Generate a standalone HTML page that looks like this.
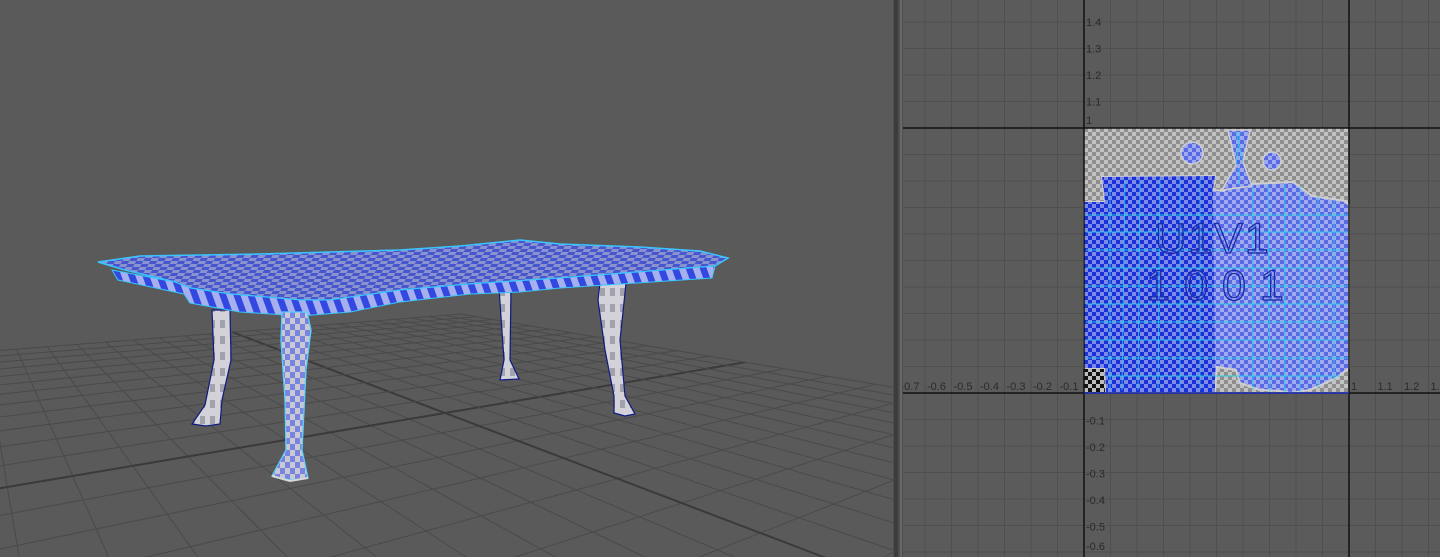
<!DOCTYPE html>
<html><head><meta charset="utf-8"><style>
html,body{margin:0;padding:0;width:1440px;height:557px;overflow:hidden;background:#5a5a5a}
svg{display:block;overflow:hidden}
text{font-family:"Liberation Sans",sans-serif}
</style></head><body>
<svg id="s" width="1440" height="557" viewBox="0 0 1440 557" xmlns="http://www.w3.org/2000/svg">
<defs>
<pattern id="gck" width="8" height="8" patternUnits="userSpaceOnUse" x="1084" y="128">
<rect width="8" height="8" fill="#c2c2c2"/><rect width="4" height="4" fill="#8e8e8e"/><rect x="4" y="4" width="4" height="4" fill="#8e8e8e"/></pattern>
<pattern id="bck" width="8" height="8" patternUnits="userSpaceOnUse" x="1084" y="128">
<rect width="8" height="8" fill="#a0aaf0"/><rect width="4" height="4" fill="#5a6ae4"/><rect x="4" y="4" width="4" height="4" fill="#5a6ae4"/></pattern>
<pattern id="dck" width="8" height="8" patternUnits="userSpaceOnUse" x="1084" y="128">
<rect width="8" height="8" fill="#7d8ae8"/><rect width="4" height="4" fill="#1a30d8"/><rect x="4" y="4" width="4" height="4" fill="#1a30d8"/></pattern>
<pattern id="kck" width="8" height="8" patternUnits="userSpaceOnUse" x="1084" y="128">
<rect width="8" height="8" fill="#bdbdbd"/><rect width="4" height="4" fill="#111"/><rect x="4" y="4" width="4" height="4" fill="#111"/></pattern>
<pattern id="tck" width="14" height="6" patternUnits="userSpaceOnUse" patternTransform="skewX(-30)">
<rect width="14" height="6" fill="#8a92d0"/><rect width="7" height="3" fill="#4656cc"/><rect x="7" y="3" width="7" height="3" fill="#4656cc"/></pattern>
<pattern id="eck" width="14" height="20" patternUnits="userSpaceOnUse" patternTransform="skewX(20)">
<rect width="14" height="20" fill="#a7b0ee"/><rect width="7" height="20" fill="#3248e0"/></pattern>
<pattern id="lck" width="10" height="12" patternUnits="userSpaceOnUse">
<rect width="10" height="12" fill="#c9c9d4"/><rect width="5" height="6" fill="#7884e0"/><rect x="5" y="6" width="5" height="6" fill="#7884e0"/></pattern>
<pattern id="gleg" width="10" height="16" patternUnits="userSpaceOnUse">
<rect width="10" height="16" fill="#d2d2d8"/><rect width="5" height="8" fill="#a2a2ac"/></pattern>
<clipPath id="vp"><rect x="0" y="0" width="893" height="557"/></clipPath>
<clipPath id="uvc"><rect x="903" y="0" width="537" height="557"/></clipPath>
</defs>
<rect x="0" y="0" width="893" height="557" fill="#5a5a5a"/>
<g id="floor" clip-path="url(#vp)"></g>
<g>
<path d="M212,310 L230,310 L231,360 L222,400 L220,424 L206,426 L192,424 L205,405 L214,360 Z" fill="url(#gleg)" stroke="#0d1a80" stroke-width="1.2"/>
<path d="M499,288 L511,288 L510,360 L519,379 L500,380 L504,360 Z" fill="url(#gleg)" stroke="#0d1a80" stroke-width="1.2"/>
<path d="M600,283 L626,283 L623,312 L620,340 L625,396 L635,414 L625,416 L614,413 L614,396 L605,350 L598,300 Z" fill="url(#gleg)" stroke="#0d1a80" stroke-width="1.2"/>
<path d="M98,262 L140,256 L260,254 L400,250 L460,246 L520,240 L560,244 L640,247 L700,251 L728,258 L715,266 L560,278 L470,284 L400,290 L330,300 L300,300 L230,294 L190,288 L175,282 L125,270 Z" fill="url(#tck)" stroke="#39c6ff" stroke-width="1.5"/>
<path d="M112,270 L175,282 L190,288 L230,294 L300,300 L330,300 L400,290 L470,284 L560,278 L715,266 L712,278 L560,288 L520,292 L470,294 L400,302 L350,312 L300,316 L240,312 L190,303 L184,294 L118,280 Z" fill="url(#eck)" stroke="#39c6ff" stroke-width="1"/>
<path d="M282,312 L307,312 L311,330 L306,370 L303,430 L302,450 L308,478 L290,480 L272,476 L286,450 L285,400 L281,340 Z" fill="url(#lck)" stroke="#5ad0ff" stroke-width="1.3"/>
<path d="M272,476 L290,481 L308,478" fill="none" stroke="#d8d8d8" stroke-width="2"/>
</g>
<rect x="893" y="0" width="10" height="557" fill="#4e4e4e"/>
<rect x="894" y="0" width="4" height="557" fill="#3c3c3c"/>
<rect x="900" y="0" width="2" height="557" fill="#686868"/>
<g clip-path="url(#uvc)">
<rect x="903" y="0" width="537" height="557" fill="#5b5b5b"/>
<g id="uvgrid"></g>
<rect x="1084" y="128" width="265" height="265" fill="url(#gck)"/>
<rect x="1084" y="368" width="21" height="25" fill="url(#kck)"/>
<path d="M1084,202 L1105,202 L1102,177 L1215,176 L1213,190 L1224,191 L1236,183 L1252,184 L1272,183 L1293,182 L1312,196 L1345,201 L1349,205 L1349,368 L1336,378 L1310,390 L1290,393 L1280,391 L1260,390 L1240,383 L1236,370 L1217,367 L1215,392 L1106,392 L1105,368 L1084,368 Z" fill="url(#bck)" stroke="#cfcfcf" stroke-width="2"/>
<path d="M1084,202 L1105,202 L1102,177 L1215,176 L1213,190 L1215,367 L1215,392 L1106,392 L1105,368 L1084,368 Z" fill="url(#dck)"/>
<circle cx="1192" cy="153" r="11" fill="url(#bck)" stroke="#cfcfcf" stroke-width="1.5"/>
<circle cx="1272" cy="161" r="9" fill="url(#bck)" stroke="#cfcfcf" stroke-width="1.5"/>
<path d="M1228,130 L1250,130 L1243,162 L1252,186 L1222,190 L1236,165 Z" fill="url(#bck)" stroke="#cfcfcf" stroke-width="1.5"/>
<g stroke="#22d2e6" stroke-width="0.9" fill="none" opacity="0.9">
<path d="M1110,186 L1110,390 M1125,180 L1122,390 M1140,180 L1138,390 M1160,178 L1158,390 M1180,178 L1180,390 M1200,178 L1200,390 M1253,186 L1253,390 M1268,184 L1270,392 M1285,184 L1285,392 M1300,186 L1300,392 M1318,196 L1318,388 M1334,200 L1334,380"/>
<path d="M1086,215 L1349,215 M1086,232 L1349,232 M1086,250 L1349,250 M1086,268 L1349,268 M1086,286 L1349,286 M1086,304 L1349,304 M1086,322 L1349,322 M1086,340 L1349,340 M1086,358 L1349,358 M1106,376 L1340,376"/>
<path d="M1236,165 L1240,132 M1243,162 L1236,132 M1239,168 L1239,186"/>
</g>
<text x="1213" y="253" font-size="43" text-anchor="middle" fill="rgba(120,140,240,0.15)" stroke="#1a2aa8" stroke-width="1.3" letter-spacing="2">U1V1</text>
<text x="1222" y="300" font-size="43" text-anchor="middle" fill="rgba(120,140,240,0.15)" stroke="#1a2aa8" stroke-width="1.3" letter-spacing="14">1001</text>
<line x1="903" y1="128" x2="1440" y2="128" stroke="#111" stroke-width="1.5"/>
<line x1="903" y1="393" x2="1440" y2="393" stroke="#111" stroke-width="1.5"/>
<line x1="1084" y1="0" x2="1084" y2="557" stroke="#111" stroke-width="1.5"/>
<line x1="1349" y1="0" x2="1349" y2="557" stroke="#111" stroke-width="1.5"/>
<line x1="1084" y1="393" x2="1349" y2="393" stroke="#2030c0" stroke-width="1.5"/>
<g id="uvlab" font-size="11" fill="#2a2a2a"></g>
</g>
</svg>
<script>
var NS="http://www.w3.org/2000/svg";
function L(g,x1,y1,x2,y2,c,w){var l=document.createElementNS(NS,"line");l.setAttribute("x1",x1.toFixed(1));l.setAttribute("y1",y1.toFixed(1));l.setAttribute("x2",x2.toFixed(1));l.setAttribute("y2",y2.toFixed(1));l.setAttribute("stroke",c);l.setAttribute("stroke-width",w);g.appendChild(l);}
var f=document.getElementById("floor");
var O=[445,413],VA=[1527,230],VB=[-36,230],a=0.032,b=0.066,N=12;
function P(u,v){var d=1+u*a+v*b;return [(O[0]+u*a*VA[0]+v*b*VB[0])/d,(O[1]+u*a*VA[1]+v*b*VB[1])/d,d];}
function seg(fn,c,wd){var pts=[];for(var t=-N;t<=N+0.001;t+=0.5){var p=fn(t);if(p[2]>0.08)pts.push(p);else pts=[];}
 for(var i=1;i<pts.length;i++){var p=pts[i-1],q=pts[i];if(Math.max(p[0],q[0])<-50||Math.min(p[0],q[0])>950||Math.min(p[1],q[1])>600)continue;L(f,p[0],p[1],q[0],q[1],c,wd);}}
for(var k=-N;k<=N;k++){(function(k){var c=k==0?"#3a3a3a":"#4a4a4a",w=k==0?2:1;
 seg(function(t){return P(k,t);},c,w);seg(function(t){return P(t,k);},c,w);})(k);}
var g=document.getElementById("uvgrid");
for(var i=-8;i<=14;i++){var x=1084+i*26.5;L(g,x,0,x,557,"#4f4f4f",1);}
for(var j=-6;j<=16;j++){var y=393-j*26.5;L(g,903,y,1440,y,"#4f4f4f",1);}
var lab=document.getElementById("uvlab");
function T(x,y,s){var t=document.createElementNS(NS,"text");t.setAttribute("x",x);t.setAttribute("y",y);t.textContent=s;lab.appendChild(t);}
for(var v=1;v<=4;v++)T(1086,128-v*26.5+4,"1."+v);
T(1086,124,"1");
for(var v=1;v<=5;v++)T(1086,393+v*26.5+5,"-0."+v);
T(1086,550,"-0.6");
for(var u=1;u<=7;u++)T(1084-u*26.5+2,390,"-0."+u);
T(1351,390,"1");
for(var u=1;u<=3;u++)T(1349+u*26.5+2,390,"1."+u);
</script>
</body></html>
